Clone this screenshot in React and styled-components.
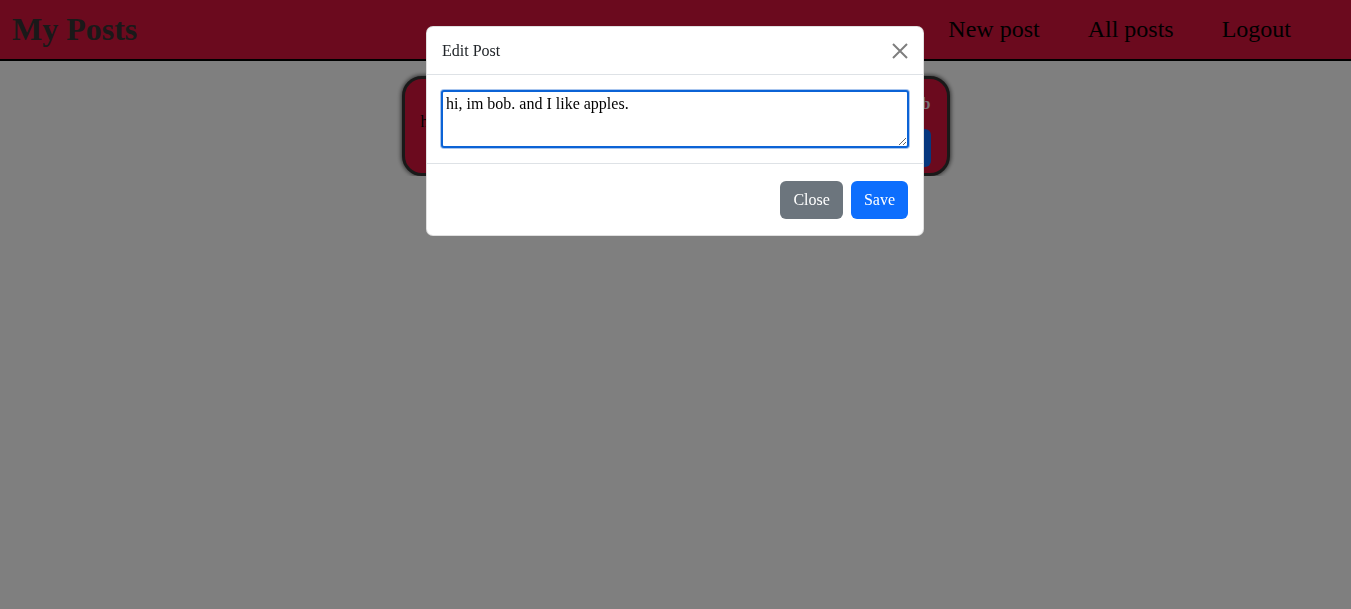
import styled, { createGlobalStyle } from 'styled-components';

const GlobalStyle = createGlobalStyle`
  body {
    margin: 0;
    background: #ffffff;
    font-family: 'Liberation Serif', 'Times New Roman', serif;
  }
`;

function CloseIcon() {
  return (
    <svg width="16" height="16" viewBox="0 0 16 16" aria-hidden="true">
      <path
        d="M1 1 L15 15 M15 1 L1 15"
        stroke="#000"
        strokeWidth="2"
        fill="none"
      />
    </svg>
  );
}

export default function App() {
  return (
    <>
      <GlobalStyle />
      <StyledHeader>
        <StyledTitle>My Posts</StyledTitle>
        <StyledNav>
          <StyledNavLink href="#">New post</StyledNavLink>
          <StyledNavLink href="#">All posts</StyledNavLink>
          <StyledNavLink href="#">Logout</StyledNavLink>
        </StyledNav>
      </StyledHeader>
      <StyledMain>
        <StyledPost>
          <StyledPostText>hi, im bob. and I like apples.</StyledPostText>
          <StyledPostSide>
            <StyledAuthor>bob</StyledAuthor>
            <StyledButton $variant="primary">Edit</StyledButton>
          </StyledPostSide>
        </StyledPost>
      </StyledMain>

      <StyledBackdrop />
      <StyledModal>
        <StyledModalHeader>
          <StyledModalTitle>Edit Post</StyledModalTitle>
          <StyledCloseButton aria-label="Close">
            <CloseIcon />
          </StyledCloseButton>
        </StyledModalHeader>
        <StyledModalBody>
          <StyledTextarea defaultValue="hi, im bob. and I like apples." />
        </StyledModalBody>
        <StyledModalFooter>
          <StyledButton $variant="secondary">Close</StyledButton>
          <StyledButton $variant="primary">Save</StyledButton>
        </StyledModalFooter>
      </StyledModal>
    </>
  );
}

const StyledHeader = styled.header`
  display: flex;
  align-items: center;
  justify-content: space-between;
  height: 59px;
  padding: 0 60px 0 12px;
  background-color: #d6143c;
  border-bottom: 2px solid #000;
`;

const StyledTitle = styled.h1`
  margin: 0;
  font-size: 32px;
  font-weight: bold;
  color: #333;
`;

const StyledNav = styled.nav`
  display: flex;
  gap: 48px;
`;

const StyledNavLink = styled.a`
  font-size: 24px;
  color: #000;
  text-decoration: none;
`;

const StyledMain = styled.main`
  display: flex;
  justify-content: center;
  padding-top: 15px;
`;

const StyledPost = styled.article`
  display: flex;
  align-items: flex-start;
  justify-content: space-between;
  width: 510px;
  padding: 16px 16px 6px;
  background-color: #d6143c;
  border: 3px solid #333;
  border-radius: 20px;
  box-shadow: 0 0 4px 1px rgba(0, 0, 0, 0.6);
`;

const StyledPostText = styled.p`
  margin: 18px 0 0;
  font-size: 16px;
  color: #000;
`;

const StyledPostSide = styled.div`
  display: flex;
  flex-direction: column;
  align-items: flex-end;
  gap: 16px;
`;

const StyledAuthor = styled.span`
  font-size: 16px;
  font-weight: bold;
  color: #f4e4ea;
`;

const StyledBackdrop = styled.div`
  position: fixed;
  inset: 0;
  background-color: rgba(0, 0, 0, 0.5);
`;

const StyledModal = styled.div`
  position: fixed;
  top: 26px;
  left: 426px;
  box-sizing: border-box;
  width: 498px;
  background-color: #fff;
  border: 1px solid rgba(0, 0, 0, 0.12);
  border-radius: 7px;
  color: #212529;
`;

const StyledModalHeader = styled.div`
  display: flex;
  align-items: center;
  justify-content: space-between;
  height: 47px;
  padding: 0 15px;
  border-bottom: 1px solid #dee2e6;
`;

const StyledModalTitle = styled.h5`
  margin: 0;
  font-size: 16px;
  font-weight: normal;
`;

const StyledCloseButton = styled.button`
  display: flex;
  padding: 0;
  border: none;
  background: none;
  opacity: 0.5;
  cursor: pointer;
`;

const StyledModalBody = styled.div`
  padding: 15px 14px 15px 14px;
`;

const StyledTextarea = styled.textarea`
  display: block;
  box-sizing: border-box;
  width: 100%;
  height: 58px;
  padding: 3px 3px;
  font-family: 'Liberation Serif', 'Times New Roman', serif;
  font-size: 16px;
  color: #000;
  border: 2px solid #0b63d6;
  border-radius: 3px;
  box-shadow: 0 0 0 1px #aac6ee;
  outline: none;
`;

const StyledModalFooter = styled.div`
  display: flex;
  justify-content: flex-end;
  gap: 8px;
  padding: 17px 15px 16px;
  border-top: 1px solid #dee2e6;
`;

const StyledButton = styled.button`
  height: 38px;
  padding: 6px 13px;
  font-family: 'Liberation Serif', 'Times New Roman', serif;
  font-size: 16px;
  color: #fff;
  background-color: ${(props) =>
    props.$variant === 'secondary' ? '#6c757d' : '#0d6efd'};
  border: none;
  border-radius: 6px;
  cursor: pointer;
`;
